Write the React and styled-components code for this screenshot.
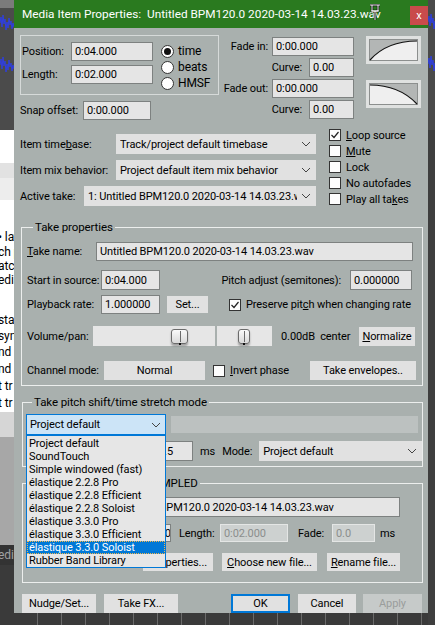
import React from "react";
import styled, { createGlobalStyle } from "styled-components";

const GlobalStyle = createGlobalStyle`
  html, body { margin: 0; padding: 0; background: #3a3a3a; }
  body { font-family: Roboto, "Liberation Sans", sans-serif; }
  * { box-sizing: border-box; }
`;

const Page = styled.div`
  display: flex;
  width: 435px;
  height: 625px;
  overflow: hidden;
  font-size: 11px;
  letter-spacing: -0.1px;
  color: #000;
`;

const Strip = styled.div`
  width: ${(p) => p.$w}px;
  flex: none;
  display: flex;
  flex-direction: column;
  overflow: hidden;
`;

const StripBlock = styled.div`
  height: ${(p) => p.$h}px;
  flex: none;
  background: ${(p) => p.$bg};
  color: ${(p) => p.$fg || "#000"};
  font-size: 12px;
  line-height: ${(p) => p.$h}px;
  white-space: nowrap;
  overflow: hidden;
  text-indent: ${(p) => p.$indent || 0}px;
`;

const CenterCol = styled.div`
  width: 414px;
  flex: none;
  display: flex;
  flex-direction: column;
`;

const Dialog = styled.div`
  height: 613px;
  flex: none;
  display: flex;
  flex-direction: column;
  background: #a9b0ae;
`;

const TitleBar = styled.div`
  height: 28px;
  flex: none;
  background: #2a7a1f;
  color: #fff;
  display: flex;
  align-items: center;
  padding-left: 8px;
  position: relative;
  font-size: 11.8px;
  letter-spacing: 0;
`;

const TitleText = styled.div`
  flex: 1;
  white-space: nowrap;
  overflow: hidden;
`;

const Pin = styled.svg`
  position: absolute;
  left: 355px;
  top: 4px;
`;

const CloseBtn = styled.div`
  width: 18px;
  height: 19px;
  align-self: flex-start;
  margin-top: 6px;
  background: #c94b4b;
  color: #fff;
  font-size: 11px;
  display: flex;
  align-items: center;
  justify-content: center;
`;

const BottomBg = styled.div`
  flex: 1;
  background: #3a3a3a;
  background-image: repeating-linear-gradient(
    90deg,
    transparent 0 23px,
    #6a6a6a 23px 24px
  );
`;

const Body = styled.div`
  flex: 1;
  display: flex;
  flex-direction: column;
  padding: 7px 0 0 6px;
`;

const TopRow = styled.div`
  display: flex;
  align-items: flex-start;
  margin-top: ${(p) => p.$mt || 0}px;
`;

const PosCol = styled.div`
  width: 199px;
  flex: none;
  display: flex;
  flex-direction: column;
`;

const PosBox = styled.div`
  height: 60px;
  border: 1px solid #d6dad9;
  display: flex;
  padding: 6px 0 0 1px;
`;

const Stack = styled.div`
  display: flex;
  flex-direction: column;
  gap: ${(p) => p.$gap || 0}px;
  margin-top: ${(p) => p.$mt || 0}px;
  margin-left: ${(p) => p.$ml || 0}px;
  width: ${(p) => (p.$w ? `${p.$w}px` : "auto")};
  flex: none;
`;

const Row = styled.div`
  display: flex;
  align-items: center;
  height: ${(p) => p.$h || 20}px;
  margin-top: ${(p) => p.$mt || 0}px;
  justify-content: ${(p) => (p.$end ? "flex-end" : "flex-start")};
  gap: ${(p) => p.$gap || 0}px;
`;

const Label = styled.span`
  width: ${(p) => (p.$w ? `${p.$w}px` : "auto")};
  flex: none;
  white-space: nowrap;
  margin-left: ${(p) => (p.$auto ? "auto" : `${p.$ml || 0}px`)};
  margin-right: ${(p) => p.$mr || 0}px;
`;

const Field = styled.div`
  width: ${(p) => p.$w}px;
  height: ${(p) => p.$h || 19}px;
  flex: none;
  background: ${(p) => (p.$off ? "#cdd1d0" : "#e5e5e5")};
  border: 1px solid ${(p) => (p.$off ? "#e4e6e5" : "#7d8180")};
  color: ${(p) => (p.$off ? "#8b8e8d" : "#000")};
  padding-left: 3px;
  display: flex;
  align-items: center;
  white-space: nowrap;
  overflow: hidden;
  margin-left: ${(p) => p.$ml || 0}px;
  margin-right: ${(p) => p.$mr || 0}px;
`;

const Blank = styled.div`
  width: ${(p) => p.$w}px;
  height: ${(p) => p.$h}px;
  flex: none;
  background: #bcc1c0;
  margin-left: ${(p) => p.$ml || 0}px;
`;

const RadioRow = styled.div`
  display: flex;
  align-items: center;
  height: 16px;
  gap: 4px;
  font-size: 12px;
`;

const RadioDot = styled.span`
  width: 13px;
  height: 13px;
  border-radius: 50%;
  border: 1px solid #333;
  background: #fff;
  display: flex;
  align-items: center;
  justify-content: center;
  &::after {
    content: "";
    width: 7px;
    height: 7px;
    border-radius: 50%;
    background: ${(p) => (p.$on ? "#111" : "transparent")};
  }
`;

const CurveFrame = styled.div`
  width: 55px;
  height: 28px;
  background: #dfe1e0;
  padding: 3px;
`;

const CheckRow = styled.div`
  display: flex;
  align-items: center;
  height: ${(p) => p.$h || 16}px;
  gap: 5px;
  white-space: nowrap;
  margin-left: ${(p) => p.$ml || 0}px;
`;

const Box = styled.span`
  width: 12px;
  height: 12px;
  flex: none;
  border: 1px solid #333;
  background: #fdfdfd;
  display: flex;
  align-items: center;
  justify-content: center;
`;

const SelectBox = styled.div`
  width: ${(p) => p.$w}px;
  height: ${(p) => p.$h || 20}px;
  flex: none;
  position: relative;
  background: ${(p) => (p.$open ? "#cce4f7" : "#e1e1e1")};
  border: 1px solid ${(p) => (p.$open ? "#0078d7" : "#e1e1e1")};
  display: flex;
  align-items: center;
  padding-left: 3px;
  margin-left: ${(p) => (p.$auto ? "auto" : `${p.$ml || 0}px`)};
`;

const SelectText = styled.span`
  flex: 1;
  white-space: nowrap;
  overflow: hidden;
`;

const ListBox = styled.div`
  position: absolute;
  left: -1px;
  top: 20px;
  width: 140px;
  padding-top: 1px;
  background: #e6e6e6;
  border: 1px solid #0078d7;
  z-index: 5;
`;

const ListItem = styled.div`
  height: 13px;
  line-height: 13px;
  padding-left: 2px;
  white-space: nowrap;
  background: ${(p) => (p.$sel ? "#0078d7" : "transparent")};
  color: ${(p) => (p.$sel ? "#fff" : "#000")};
  outline: ${(p) => (p.$sel ? "1px dotted #f2b64a" : "none")};
  outline-offset: -1px;
`;

const Button = styled.div`
  width: ${(p) => p.$w}px;
  height: ${(p) => p.$h || 19}px;
  flex: none;
  background: ${(p) => (p.$off ? "#c6cac9" : "#e1e1e1")};
  color: ${(p) => (p.$off ? "#9a9d9c" : "#000")};
  border: ${(p) => (p.$def ? "2px solid #0078d7" : "1px solid transparent")};
  display: flex;
  align-items: center;
  justify-content: center;
  white-space: nowrap;
  overflow: hidden;
  margin-left: ${(p) => (p.$auto ? "auto" : `${p.$ml || 0}px`)};
  margin-right: ${(p) => p.$mr || 0}px;
`;

const Group = styled.fieldset`
  margin: ${(p) => p.$mt}px 0 0 ${(p) => p.$ml}px;
  width: ${(p) => 423 - 20 - p.$ml}px;
  min-width: 0;
  border: 1px solid #eceeed;
  padding: ${(p) => p.$pad};
`;

const Legend = styled.legend`
  padding: 0 2px;
  margin-left: 6px;
  line-height: 14px;
  font-size: 11.5px;
`;

const Track = styled.div`
  width: ${(p) => p.$w}px;
  height: 20px;
  flex: none;
  position: relative;
  background: #e6e6e6;
  margin-left: ${(p) => p.$ml || 0}px;
`;

const Thumb = styled.div`
  position: absolute;
  top: 3px;
  width: ${(p) => p.$w}px;
  height: 15px;
  border: 1px solid #6b6b6b;
  border-radius: 3px;
  background: linear-gradient(#fafafa, #d9d9d9);
  box-shadow: 0 2px 2px rgba(0, 0, 0, 0.3);
  &::before {
    content: "";
    position: absolute;
    left: 50%;
    top: 1px;
    bottom: 1px;
    width: 1px;
    background: #6b6b6b;
  }
  &::after {
    content: "";
    position: absolute;
    left: calc(50% - 1px);
    bottom: -2px;
    width: 2px;
    height: 2px;
    background: #111;
  }
`;

const Chevron = () => (
  <svg width="18" height="10" viewBox="0 0 18 10">
    <polyline points="5,3 9,7 13,3" fill="none" stroke="#444" strokeWidth="1" />
  </svg>
);

const Tick = () => (
  <svg width="10" height="10" viewBox="0 0 10 10">
    <polyline points="1.5,5 4,7.5 8.5,2" fill="none" stroke="#222" strokeWidth="1.2" />
  </svg>
);

const Select = ({ w, text, open, auto, ml, h, children }) => (
  <SelectBox $w={w} $open={open} $auto={auto} $ml={ml} $h={h}>
    <SelectText>{text}</SelectText>
    <Chevron />
    {children}
  </SelectBox>
);

const Check = ({ on, children, ml, h }) => (
  <CheckRow $ml={ml} $h={h}>
    <Box>{on && <Tick />}</Box>
    <span>{children}</span>
  </CheckRow>
);

const Curve = ({ out }) => (
  <CurveFrame>
    <svg width="49" height="22" viewBox="0 0 49 22">
      <rect x="0.5" y="0.5" width="48" height="21" fill="#b3b6b5" stroke="#8c8f8e" />
      {out ? (
        <path d="M1,2 Q30,2 48,21 L1,21 Z" fill="#efefef" />
      ) : (
        <path d="M1,21 Q18,2 48,2 L48,21 Z" fill="#efefef" />
      )}
      {out ? (
        <path d="M1,2 Q30,2 48,21" fill="none" stroke="#111" strokeWidth="1.2" />
      ) : (
        <path d="M1,21 Q18,2 48,2" fill="none" stroke="#111" strokeWidth="1.2" />
      )}
    </svg>
  </CurveFrame>
);

const Wave = ({ w, h, bg, spots }) => (
  <svg width={w} height={h} viewBox={`0 0 ${w} ${h}`} style={{ display: "block", flex: "none" }}>
    <rect width={w} height={h} fill={bg} />
    {spots.map((s, i) => (
      <path
        key={i}
        d={`M0,${s} l1,-6 l1,10 l1,-12 l1,9 l1,-5 l1,11 l1,-8 l1,6 l1,-10 l1,7 l1,-4 l1,8 l1,-6 l1,4`}
        fill="none"
        stroke="#2f3fe0"
        strokeWidth="1"
      />
    ))}
  </svg>
);

const pitchModes = [
  "Project default",
  "SoundTouch",
  "Simple windowed (fast)",
  "élastique 2.2.8 Pro",
  "élastique 2.2.8 Efficient",
  "élastique 2.2.8 Soloist",
  "élastique 3.3.0 Pro",
  "élastique 3.3.0 Efficient",
  "élastique 3.3.0 Soloist",
  "Rubber Band Library",
];

const leftRows = [
  { h: 8, bg: "#7b7b7b" },
  { h: 122, wave: true },
  { h: 33, bg: "#ffffff" },
  { h: 15, bg: "#e2e2e2" },
  { h: 22, bg: "#ededed" },
  { h: 30, bg: "#ffffff" },
  { h: 15, bg: "#fff", t: "• lat" },
  { h: 14, bg: "#fff", t: "ch p" },
  { h: 14, bg: "#fff", t: "atc" },
  { h: 15, bg: "#fff", t: "edia" },
  { h: 25, bg: "#fff" },
  { h: 15, bg: "#fff", t: "star" },
  { h: 16, bg: "#fff", t: "syn" },
  { h: 17, bg: "#fff", t: "nd" },
  { h: 17, bg: "#fff", t: "nd" },
  { h: 17, bg: "#fff", t: "t tr" },
  { h: 17, bg: "#fff", t: "t tr" },
  { h: 25, bg: "#d6d6d6" },
  { h: 108, bg: "#a7a7a7" },
  { h: 20, bg: "#333333", t: "edia", fg: "#a0a0a0" },
  { h: 55, bg: "#3a3a3a" },
];

export default function App() {
  return (
    <>
      <GlobalStyle />
      <Page>
        <Strip $w={14}>
          {leftRows.map((r, i) =>
            r.wave ? (
              <Wave key={i} w={14} h={r.h} bg="#4b4b4b" spots={[15, 57]} />
            ) : (
              <StripBlock key={i} $h={r.h} $bg={r.bg} $fg={r.fg} $indent={-2}>
                {r.t}
              </StripBlock>
            )
          )}
        </Strip>

        <CenterCol>
          <Dialog>
            <TitleBar>
              <TitleText>Media Item Properties:&nbsp; Untitled BPM120.0 2020-03-14 14.03.23.wav</TitleText>
              <Pin width="12" height="17" viewBox="0 0 12 17">
                <path d="M1,1 H11 M3,1 V7 H9 V1 M2,7 H10 M6,7 V16" fill="none" stroke="#000" strokeWidth="2.4" />
                <path d="M1,1 H11 M3,1 V7 H9 V1 M2,7 H10 M6,7 V16" fill="none" stroke="#fff" strokeWidth="1" />
              </Pin>
              <CloseBtn>x</CloseBtn>
            </TitleBar>

            <Body>
              <TopRow>
                <PosCol>
                  <PosBox>
                    <Stack $gap={4}>
                      <Row $h={19}>
                        <Label $w={49}>Position:</Label>
                        <Field $w={82}>0:04.000</Field>
                      </Row>
                      <Row $h={19}>
                        <Label $w={49}>Length:</Label>
                        <Field $w={82}>0:02.000</Field>
                      </Row>
                    </Stack>
                    <Stack $mt={1} $ml={8}>
                      <RadioRow><RadioDot $on />time</RadioRow>
                      <RadioRow><RadioDot />beats</RadioRow>
                      <RadioRow><RadioDot />HMSF</RadioRow>
                    </Stack>
                  </PosBox>
                  <Row $h={19} $mt={6}>
                    <Label $w={63}>Snap offset:</Label>
                    <Field $w={68}>0:00.000</Field>
                  </Row>
                </PosCol>

                <Stack $w={135} $mt={2} $gap={2}>
                  <Row $h={19} $end $gap={4}>
                    <Label>Fade in:</Label>
                    <Field $w={82}>0:00.000</Field>
                  </Row>
                  <Row $h={19} $end $gap={7}>
                    <Label>Curve:</Label>
                    <Field $w={45}>0.00</Field>
                  </Row>
                  <Row $h={19} $end $gap={4}>
                    <Label>Fade out:</Label>
                    <Field $w={82}>0:00.000</Field>
                  </Row>
                  <Row $h={19} $end $gap={7}>
                    <Label>Curve:</Label>
                    <Field $w={45}>0.00</Field>
                  </Row>
                </Stack>

                <Stack $ml={12} $mt={1} $gap={16}>
                  <Curve />
                  <Curve out />
                </Stack>
              </TopRow>

              <TopRow $mt={7}>
                <Stack $w={296} $mt={7} $gap={6}>
                  <Row>
                    <Label>Item time<u>b</u>ase:</Label>
                    <Select w={200} auto text="Track/project default timebase" />
                  </Row>
                  <Row>
                    <Label>Item mix behavior:</Label>
                    <Select w={200} auto text="Project default item mix behavior" />
                  </Row>
                  <Row>
                    <Label>Active take:</Label>
                    <Select w={232} auto text="1: Untitled BPM120.0 2020-03-14 14.03.23.wav" />
                  </Row>
                </Stack>
                <Stack $ml={13}>
                  <Check on><u>L</u>oop source</Check>
                  <Check><u>M</u>ute</Check>
                  <Check>Lock</Check>
                  <Check>No autofades</Check>
                  <Check>Play all ta<u>k</u>es</Check>
                </Stack>
              </TopRow>

              <Group $mt={13} $ml={1} $pad="8px 9px 5px 5px">
                <Legend>Take properties</Legend>
                <Row $h={19}>
                  <Label $w={69}><u>T</u>ake name:</Label>
                  <Field $w={317}>Untitled BPM120.0 2020-03-14 14.03.23.wav</Field>
                </Row>
                <Row $mt={9}>
                  <Label $w={74}>Start in source:</Label>
                  <Field $w={59} $h={20}>0:04.000</Field>
                  <Label $auto $mr={9}>Pitch adjust (semitones):</Label>
                  <Field $w={62} $h={20} $mr={1}>0.000000</Field>
                </Row>
                <Row $mt={5} $h={19}>
                  <Label $w={74}>Playback rate:</Label>
                  <Field $w={59} $h={19}>1.000000</Field>
                  <Button $w={41} $h={17} $ml={7}>Set...</Button>
                  <Check on ml={21} h={19}>Preserve pit<u>c</u>h when changing rate</Check>
                </Row>
                <Row $mt={12}>
                  <Label $w={66}>Volume/pan:</Label>
                  <Track $w={122}>
                    <Thumb $w={17} style={{ left: 78 }} />
                  </Track>
                  <Track $w={55} $ml={2}>
                    <Thumb $w={12} style={{ left: 21 }} />
                  </Track>
                  <Label $ml={9}>0.00dB&nbsp; center</Label>
                  <Button $w={56} $h={19} $auto $mr={-2}><u>N</u>ormalize</Button>
                </Row>
                <Row $mt={15} $h={19}>
                  <Label $w={77}>Channel mode:</Label>
                  <Button $w={101}>Normal</Button>
                  <Check ml={8} h={19}><u>I</u>nvert phase</Check>
                  <Button $w={106} $auto $mr={-3}>Take envelopes..</Button>
                </Row>
              </Group>

              <Group $mt={9} $ml={2} $pad="5px 5px 5px 3px">
                <Legend>Take pitch shift/time stretch mode</Legend>
                <Row $h={21}>
                  <Select w={140} h={21} open text="Project default">
                    <ListBox>
                      {pitchModes.map((m) => (
                        <ListItem key={m} $sel={m === "élastique 3.3.0 Soloist"}>
                          {m}
                        </ListItem>
                      ))}
                    </ListBox>
                  </Select>
                  <Blank $w={247} $h={17} $ml={5} />
                </Row>
                <Row $mt={6}>
                  <Label $w={128}>Stretch marker fade size:</Label>
                  <Field $w={39} $h={20}>2.5</Field>
                  <Label $ml={7}>ms</Label>
                  <Label $ml={7}>Mode:</Label>
                  <Select w={163} ml={7} text="Project default" />
                </Row>
              </Group>

              <Group $mt={9} $ml={2} $pad="7px 5px 11px 5px">
                <Legend>Source: WAVE, 2ch RESAMPLED</Legend>
                <Row>
                  <Label $w={88}>File:</Label>
                  <Field $w={284} $h={20}>Untitled BPM120.0 2020-03-14 14.03.23.wav</Field>
                </Row>
                <Row $mt={7} $h={18}>
                  <Label $w={103}>Section start:</Label>
                  <Field $w={40} $h={18}>0:00.000</Field>
                  <Label $ml={8} $w={41}>Length:</Label>
                  <Field $w={68} $h={18} $off>0:02.000</Field>
                  <Label $ml={10} $w={34}>Fade:</Label>
                  <Field $w={43} $h={18} $off>0.0</Field>
                  <Label $ml={5}>ms</Label>
                </Row>
                <Row $mt={11} $h={18}>
                  <Button $w={70} $h={18} $ml={115}>Properties...</Button>
                  <Button $w={95} $h={18} $ml={9}><u>C</u>hoose new file...</Button>
                  <Button $w={73} $h={18} $ml={10}><u>R</u>ename file...</Button>
                </Row>
              </Group>

              <Row $mt={11} $h={19}>
                <Button $w={74} $ml={2}>Nudge/Set...</Button>
                <Button $w={74} $ml={8}>Take FX...</Button>
                <Button $w={59} $ml={53} $def>OK</Button>
                <Button $w={58} $ml={8}>Cancel</Button>
                <Button $w={59} $ml={7} $off>Apply</Button>
              </Row>
            </Body>
          </Dialog>
          <BottomBg />
        </CenterCol>

        <Strip $w={7}>
          <Wave w={7} h={130} bg="#4a4a4a" spots={[22, 64]} />
          <StripBlock $h={495} $bg="#3e3e3e" />
        </Strip>
      </Page>
    </>
  );
}
